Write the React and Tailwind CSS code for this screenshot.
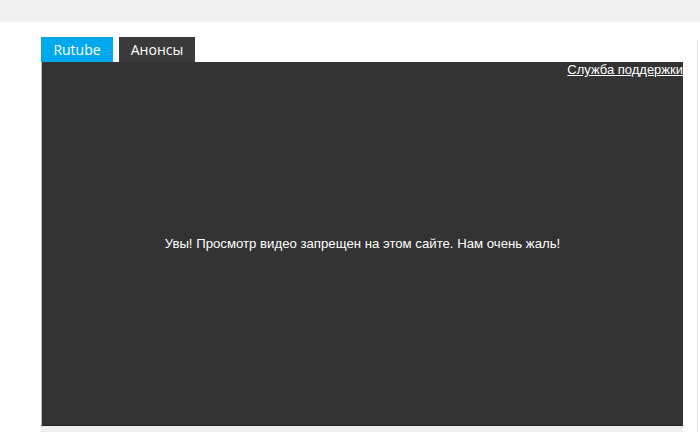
export default function App() {
  return (
    <div className="w-[700px] h-[432px] bg-white overflow-hidden relative" style={{ fontFamily: '"Liberation Sans", Arial, sans-serif' }}>
      <div className="h-[22px] bg-[#f0f0f0]" />
      <div className="pl-[41px] pt-[15px]">
        <div className="flex gap-[6px] h-[25px]" style={{ fontFamily: '"Open Sans", sans-serif' }}>
          <div className="w-[72px] bg-[#00a9ec] text-white text-[14px] flex items-center justify-center">Rutube</div>
          <div className="w-[76px] bg-[#3a3a3a] text-white text-[14px] flex items-center justify-center">Анонсы</div>
        </div>
        <div className="w-[642px] h-[364px] bg-[#333333] border-l border-l-[#bdbdbd] border-b border-b-[#222] relative flex items-center justify-center">
          <a href="#" className="absolute right-0 top-0 text-white text-[13px] underline leading-[15px]">Служба поддержки</a>
          <span className="text-white text-[13.2px]">Увы! Просмотр видео запрещен на этом сайте. Нам очень жаль!</span>
        </div>
        <div className="w-[642px] h-[8px] bg-[#eeeeee]" />
      </div>
      <div className="absolute right-[2px] top-[40px] bottom-0 w-px bg-[#e8e8e8]" />
    </div>
  );
}
